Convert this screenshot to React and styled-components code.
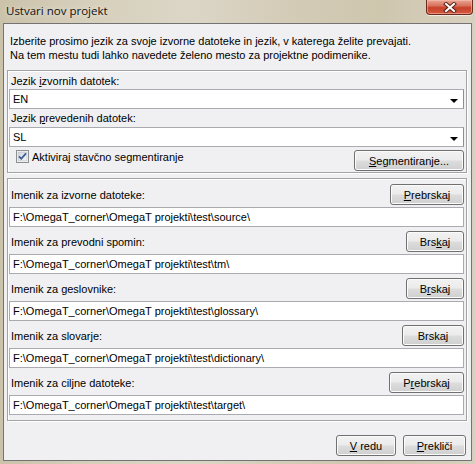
import styled, { createGlobalStyle } from 'styled-components';

const GlobalStyle = createGlobalStyle`
  html, body {
    margin: 0;
    padding: 0;
    background: #d2cab5;
  }
  body {
    font-family: "Liberation Sans", Arial, sans-serif;
    font-size: 11px;
    color: #000;
  }
`;

const Window = styled.div`
  width: 475px;
  height: 464px;
  display: flex;
  flex-direction: column;
  overflow: hidden;
  background: linear-gradient(90deg, #cbc2aa 0%, #d6cfbb 18%, #dcd6c7 40%, #d3cbb6 62%, #cfc6ae 80%, #d8d1bf 100%);
`;

const TitleBar = styled.div`
  height: 23px;
  flex-shrink: 0;
  display: flex;
  align-items: flex-start;
`;

const Title = styled.div`
  font-family: "Open Sans", "Liberation Sans", sans-serif;
  font-size: 11.5px;
  line-height: 22px;
  padding-left: 6px;
  color: #111;
  text-shadow: 0 0 6px rgba(255, 255, 255, 0.8);
`;

const CloseButton = styled.div`
  margin-left: auto;
  margin-right: 2px;
  width: 47px;
  height: 15px;
  box-sizing: border-box;
  border: 1px solid #6b2a1d;
  border-top: none;
  border-radius: 0 0 4px 4px;
  background: linear-gradient(#e8a594 0%, #d9735f 40%, #c7412a 55%, #d45a40 100%);
  box-shadow: inset 0 0 0 1px rgba(255, 200, 190, 0.5), 0 1px 0 rgba(255, 255, 255, 0.6);
  display: flex;
  align-items: center;
  justify-content: center;
`;

const Client = styled.div`
  flex: 1;
  margin: 0 3px 3px 3px;
  border: 1px solid #737373;
  background: #f0f0f2;
  display: flex;
  flex-direction: column;
`;

const Intro = styled.div`
  padding: 10px 6px 0;
  line-height: 14px;
`;

const Group = styled.div`
  margin: ${({ $top }) => $top}px 4px 0 3px;
  border: 1px solid #a3a3a3;
  box-shadow: inset 1px 1px 0 #fff, 1px 1px 0 #fff;
  padding: 1px 2px ${({ $bottom }) => $bottom}px 1px;
  display: flex;
  flex-direction: column;
`;

const Label = styled.div`
  height: ${({ $h }) => $h}px;
  display: flex;
  align-items: flex-end;
  padding: 0 0 ${({ $pb }) => $pb}px 2px;
  box-sizing: border-box;
`;

const Combo = styled.div`
  position: relative;
  height: 20px;
  box-sizing: border-box;
  border: 1px solid #a9abb0;
  border-right-color: #8d8f93;
  background: #fff;
  padding-left: 3px;
  line-height: 18px;
`;

const Arrow = styled.span`
  position: absolute;
  right: 5px;
  top: 9px;
  width: 0;
  height: 0;
  border-left: 4px solid transparent;
  border-right: 4px solid transparent;
  border-top: 4px solid #000;
`;

const CheckRow = styled.div`
  margin-top: 3px;
  display: flex;
  justify-content: space-between;
  align-items: flex-start;
`;

const CheckLabel = styled.label`
  display: flex;
  align-items: center;
  gap: 3px;
  padding-left: 7px;
  height: 13px;
`;

const Row = styled.div`
  padding-top: 4px;
`;

const RowHead = styled.div`
  height: 21px;
  display: flex;
  align-items: center;
  justify-content: space-between;
  padding-left: 2px;
`;

const Field = styled.div`
  margin-top: 2px;
  height: 20px;
  box-sizing: border-box;
  border: 1px solid #a9abb0;
  background: #fff;
  padding-left: 3px;
  line-height: 18px;
  white-space: nowrap;
  overflow: hidden;
`;

const Button = styled.div`
  width: ${({ $w }) => $w}px;
  height: 21px;
  box-sizing: border-box;
  border: 1px solid #707070;
  border-radius: 3px;
  background: linear-gradient(#f2f2f2 0%, #ebebeb 48%, #dddddd 52%, #cfcfcf 100%);
  box-shadow: inset 0 0 0 1px #fbfbfb;
  display: flex;
  align-items: center;
  justify-content: center;
  flex-shrink: 0;
`;

const Footer = styled.div`
  display: flex;
  justify-content: flex-end;
  gap: 7px;
  padding: 14px 5px 0 0;
`;

const Mn = styled.span`
  text-decoration: underline;
`;

const CheckIcon = () => (
  <svg width="13" height="13" viewBox="0 0 13 13">
    <defs>
      <linearGradient id="cb" x1="0" y1="0" x2="1" y2="1">
        <stop offset="0" stopColor="#cdd4df" />
        <stop offset="1" stopColor="#f6f7f9" />
      </linearGradient>
    </defs>
    <rect x="0.5" y="0.5" width="12" height="12" fill="#fff" stroke="#8e8f8f" />
    <rect x="2" y="2" width="9" height="9" fill="url(#cb)" stroke="#b4bac4" strokeWidth="0.6" />
    <path d="M3 6.3 L5.3 8.8 L10 3.4" fill="none" stroke="#3c5a92" strokeWidth="1.7" />
  </svg>
);

const CloseX = () => (
  <svg width="14" height="11" viewBox="0 0 14 11">
    <path d="M3 2 L11 9 M11 2 L3 9" stroke="#5b2418" strokeWidth="4" strokeLinecap="square" />
    <path d="M3 2 L11 9 M11 2 L3 9" stroke="#fff" strokeWidth="2" strokeLinecap="square" />
  </svg>
);

const rows = [
  { label: 'Imenik za izvorne datoteke:', path: 'F:\\OmegaT_corner\\OmegaT projekti\\test\\source\\', w: 74, btn: <><Mn>P</Mn>rebrskaj</> },
  { label: 'Imenik za prevodni spomin:', path: 'F:\\OmegaT_corner\\OmegaT projekti\\test\\tm\\', w: 58, btn: <>Brs<Mn>k</Mn>aj</> },
  { label: 'Imenik za geslovnike:', path: 'F:\\OmegaT_corner\\OmegaT projekti\\test\\glossary\\', w: 58, btn: <>B<Mn>r</Mn>skaj</> },
  { label: 'Imenik za slovarje:', path: 'F:\\OmegaT_corner\\OmegaT projekti\\test\\dictionary\\', w: 62, btn: <>Brskaj</> },
  { label: 'Imenik za ciljne datoteke:', path: 'F:\\OmegaT_corner\\OmegaT projekti\\test\\target\\', w: 75, btn: <>P<Mn>r</Mn>ebrskaj</> },
];

export default function App() {
  return (
    <>
      <GlobalStyle />
      <Window>
        <TitleBar>
          <Title>Ustvari nov projekt</Title>
          <CloseButton><CloseX /></CloseButton>
        </TitleBar>
        <Client>
          <Intro>
            Izberite prosimo jezik za svoje izvorne datoteke in jezik, v katerega želite prevajati.
            <br />
            Na tem mestu tudi lahko navedete želeno mesto za projektne podimenike.
          </Intro>
          <Group $top={8} $bottom={1}>
            <Label $h={17} $pb={2}><span>Jezik <Mn>i</Mn>zvornih datotek:</span></Label>
            <Combo>EN<Arrow /></Combo>
            <Label $h={18} $pb={3}><span>Jezik <Mn>p</Mn>revedenih datotek:</span></Label>
            <Combo>SL<Arrow /></Combo>
            <CheckRow>
              <CheckLabel><CheckIcon /><span>Aktiviraj stavčno segmentiranje</span></CheckLabel>
              <Button $w={110}><span><Mn>S</Mn>egmentiranje...</span></Button>
            </CheckRow>
          </Group>
          <Group $top={5} $bottom={5}>
            {rows.map((r) => (
              <Row key={r.label}>
                <RowHead>
                  <span>{r.label}</span>
                  <Button $w={r.w}><span>{r.btn}</span></Button>
                </RowHead>
                <Field>{r.path}</Field>
              </Row>
            ))}
          </Group>
          <Footer>
            <Button $w={60}><span><Mn>V</Mn> redu</span></Button>
            <Button $w={63}><span><Mn>P</Mn>rekliči</span></Button>
          </Footer>
        </Client>
      </Window>
    </>
  );
}
